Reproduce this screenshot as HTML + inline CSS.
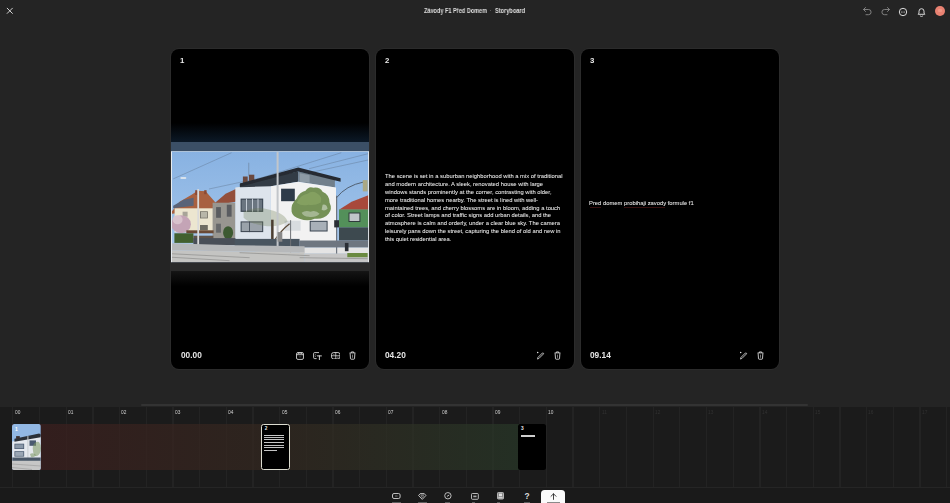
<!DOCTYPE html>
<html><head><meta charset="utf-8">
<style>
*{box-sizing:border-box;margin:0;padding:0}
html,body{width:950px;height:503px;overflow:hidden;background:#242424;-webkit-font-smoothing:antialiased;font-family:"Liberation Sans",sans-serif;color:#e6e6e6}
.abs{position:absolute}
.title{will-change:transform;position:absolute;top:6.6px;font-size:6.6px;font-weight:700;color:#dedede;white-space:nowrap;transform-origin:0 0}
.card{position:absolute;top:48.9px;width:198px;height:319.8px;background:#000;border-radius:8px;box-shadow:0 0 0 1px rgba(255,255,255,0.035);overflow:hidden}
.num{will-change:transform;position:absolute;left:9px;top:7.4px;font-size:7.8px;font-weight:700;color:#ececec}
.time{will-change:transform;position:absolute;left:9.3px;top:301.6px;font-size:8.3px;font-weight:700;color:#e4e4e4}
.desc{will-change:transform;position:absolute;left:8.9px;font-size:5.83px;line-height:7.88px;color:#ececec;white-space:nowrap;-webkit-text-stroke:0.04px #ececec}
.tl{position:absolute;left:0;top:407.4px;width:950px;height:79.6px;background:#1b1b1b;overflow:hidden}
.grid{position:absolute;top:0;width:1.3px;height:80px;background:#232323}
.lab{will-change:transform;position:absolute;top:2.3px;font-size:4.8px;color:#c8c8c8}
.tb{position:absolute;top:486.5px;left:0;width:950px;height:16.5px;background:#1a1a1a;border-top:1px solid #252525}
.ic{position:absolute}
</style></head><body>
<svg width="0" height="0" style="position:absolute"><defs>
<filter id="soft" x="-5%" y="-5%" width="110%" height="110%"><feGaussianBlur stdDeviation="0.35"/></filter>
<linearGradient id="sky" x1="0" y1="0" x2="0" y2="1"><stop offset="0" stop-color="#88b2e2"/><stop offset="0.6" stop-color="#9cc0e8"/><stop offset="1" stop-color="#b0ccec"/></linearGradient>
<g id="photo">
<rect x="171" y="152" width="199" height="111" fill="url(#sky)"/>
<!-- wires -->
<path d="M173.6 179.2L232 153M209.4 189.3L262 178M262 178L341.7 153M309.5 169L370 153.6M296 176L370 160" stroke="#4a5868" stroke-width="0.3" fill="none"/>
<rect x="180.7" y="177.4" width="6" height="2" rx="1" fill="#d8e2ec"/>
<!-- left house roof -->
<polygon points="172,212 180,202 192,195 198,191 206,191.5 217,204 217,210 172,214" fill="#a8603f"/>
<polygon points="173.6,206 184,200 194,198 194,206 173.6,208.5" fill="#5a6478"/>
<rect x="195.6" y="190.5" width="2.4" height="4.8" fill="#8a4a35"/>
<rect x="204.6" y="190.5" width="2.4" height="4" fill="#8a4a35"/>
<!-- cream house -->
<rect x="175" y="208.6" width="38.5" height="24" fill="#ece6d0"/>
<rect x="200.4" y="211.6" width="7.8" height="7.1" fill="#6e6c62"/>
<rect x="201.2" y="212.3" width="6.2" height="5.7" fill="#b8b6a8"/>
<rect x="200.4" y="225.3" width="7.8" height="5.3" fill="#6e6c62"/>
<rect x="183" y="212" width="5" height="5" fill="#a8a498"/>
<!-- gray house -->
<polygon points="212,206 226,194 240,187.5 242,188 242,197 236,202 213,206" fill="#94503a"/>
<rect x="213" y="203" width="23" height="36.6" fill="#989690"/>
<rect x="216.5" y="207.4" width="4.8" height="10.7" fill="#5a5c60"/>
<rect x="227.2" y="205" width="4.8" height="12" fill="#5a5c60"/>
<rect x="216.5" y="224" width="4.8" height="9" fill="#66686a"/>
<ellipse cx="228.5" cy="233" rx="5" ry="6.5" fill="#3c5a32"/>
<!-- pink tree / canopy / hedge -->
<ellipse cx="181.5" cy="224.5" rx="9.8" ry="9" fill="#c4a4b6"/>
<ellipse cx="178" cy="220" rx="5" ry="4.5" fill="#d8c2cc"/>
<rect x="186.7" y="230.6" width="27.3" height="3" fill="#6a4a35"/>
<rect x="174.8" y="233.6" width="19" height="9.6" fill="#42602e"/>
<rect x="193.8" y="236" width="20" height="7" fill="#5e5248"/>
<!-- white house left section (shadowed) -->
<polygon points="235.7,187.8 271.2,183.2 271.2,239.2 235.7,239.2" fill="#dde4ec"/>
<rect x="243.3" y="176.8" width="4.8" height="8" fill="#6a4a40"/>
<rect x="249.3" y="175" width="5.4" height="8" fill="#6a4a40"/>
<rect x="249.1" y="163" width="0.4" height="13" fill="#5a6470"/>
<polygon points="240.3,184 271.2,177 298.6,171.7 298.6,182 271.2,186.6 240.3,187.5" fill="#333b44"/>
<polygon points="298.6,171.7 335.3,179.7 335.3,187.8 298.6,182" fill="#717f8b"/>
<polygon points="300,173.5 310,175.5 310,183 300,182" fill="#8d9aa5"/>
<polygon points="240.3,183.9 298.6,167.8 341,178.6 341,182 298.6,171.7 240.3,187" fill="#262b31"/>
<polygon points="271.2,186.6 298.6,182 336.4,187.8 336.4,241.5 271.2,241.5" fill="#f2f2f2"/>
<rect x="241" y="198.9" width="22.6" height="13.3" fill="#3a4550"/>
<rect x="242" y="200" width="20.6" height="11" fill="#6a7480"/>
<rect x="241" y="221.7" width="22.6" height="10.7" fill="#3a4550"/>
<rect x="242" y="222.7" width="20.6" height="8.7" fill="#9aa2aa"/>
<rect x="246.5" y="199" width="0.8" height="13" fill="#dde4ec"/>
<rect x="252.4" y="199" width="0.8" height="13" fill="#dde4ec"/>
<rect x="258" y="199" width="0.8" height="13" fill="#dde4ec"/>
<rect x="249.5" y="221.7" width="0.8" height="10.7" fill="#3a4550"/>
<rect x="281.5" y="189" width="13.7" height="12.5" fill="#2e3a48"/>
<rect x="310.1" y="221.1" width="17.9" height="10.7" fill="#3a4550"/>
<rect x="311.1" y="222.1" width="15.9" height="8.7" fill="#a8b0b8"/>
<rect x="285" y="221" width="16" height="10" fill="#d8dcdf"/>
<!-- tree main -->
<path d="M292 212Q291 204 297 199Q300 192 306 191Q309 186 314 188Q320 187 323 192Q330 195 330 203Q333 209 329 214Q324 220 315 219Q308 222 300 219Q293 217 292 212Z" fill="#6a8a4a" opacity="0.93"/>
<path d="M297 203Q301 195 308 194Q313 190 318 194Q323 197 321 203Q315 206 309 205Q302 207 297 203Z" fill="#8aa664" opacity="0.75"/>
<path d="M302 213Q306 210 311 212Q316 210 320 214Q316 218 309 217Q304 217 302 213Z" fill="#dfe4dc" opacity="0.45"/>
<path d="M323 205Q327 204 328 209Q325 212 322 210Z" fill="#e8ece6" opacity="0.5"/>
<path d="M290 224Q282 230 274 242" stroke="#5a4a38" stroke-width="1.3" fill="none"/>
<!-- small sparse tree left -->
<path d="M244 212Q256 206 270 210Q286 214 288 222Q278 228 264 226Q250 224 244 218Z" fill="#6a7a4e" opacity="0.3"/>
<rect x="271.5" y="220" width="2.5" height="22" fill="#4a3e30"/>
<!-- green house -->
<polygon points="339.4,210 352,202 370,195 370,210" fill="#a84a3a"/>
<rect x="339.4" y="209.8" width="30.6" height="18" fill="#52905a"/>
<rect x="348.9" y="212.8" width="11.9" height="9.5" fill="#2e3a3a"/>
<rect x="349.9" y="213.8" width="9.9" height="7.5" fill="#c0c6c8"/>
<rect x="339.4" y="227.7" width="30.6" height="13.1" fill="#3e4850"/>
<!-- fence / base -->
<rect x="193.8" y="238.4" width="42" height="7" fill="#4a4f58"/>
<rect x="235" y="239.2" width="65" height="8.5" fill="#4a5560"/>
<rect x="300" y="240.8" width="70" height="7.1" fill="#6e7680"/>
<rect x="300" y="247.9" width="70" height="6" fill="#e4e4e4"/>
<rect x="345.3" y="243.2" width="3.6" height="8.3" fill="#2a2e34"/>
<!-- poles / lights -->
<rect x="197.7" y="189.4" width="1.8" height="56.5" fill="#dadada"/>
<rect x="277" y="152.4" width="2" height="100.3" fill="#c2c6ca"/>
<rect x="278" y="232.4" width="4.7" height="9.6" fill="#888"/>
<rect x="290.5" y="220.5" width="1" height="35.8" fill="#6e7276"/>
<rect x="336.4" y="196" width="1.2" height="61.5" fill="#6e7680"/>
<path d="M337 198Q346 186 364.4 182.2" stroke="#4a5664" stroke-width="0.9" fill="none"/>
<rect x="363.2" y="180.4" width="4.8" height="11.3" fill="#aaa884"/>
<rect x="334.6" y="220.5" width="4.8" height="7.2" fill="#2a2e34"/>
<!-- sidewalk / road -->
<polygon points="171,243.5 235,245.5 305,246.5 305,253 171,250.5" fill="#b6b8ba"/>
<polygon points="305,253.9 370,253.9 370,262.6 305,262.6" fill="#c6c6c6"/>
<polygon points="171,250.5 305,252.7 305,262.6 171,262.6" fill="#c4c4c2"/>
<path d="M171 254L250 258M171 257.5L230 261M240 253L310 256M300 258L368 259" stroke="#8e8e8c" stroke-width="0.7" fill="none"/>
<rect x="347.7" y="253.3" width="20.3" height="4.2" fill="#6a8a40"/>
<rect x="368.5" y="152" width="1.5" height="111" fill="#e8ecef"/>
<rect x="171" y="152" width="1.4" height="111" fill="#e8ecef"/>
</g>

</defs></svg>

<!-- header -->
<svg class="abs" style="left:6px;top:7px" width="8" height="8" viewBox="0 0 8 8"><path d="M1.2 1.2L6.4 6.4M6.4 1.2L1.2 6.4" stroke="#e8e8e8" stroke-width="0.9" stroke-linecap="round"/></svg>
<div class="title" style="left:424px;transform:scaleX(0.84)">Závody F1 Před Domem</div>
<div class="abs" style="left:490.3px;top:10.2px;width:1.2px;height:1.2px;border-radius:1px;background:#6a6a6a"></div>
<div class="title" style="left:494.8px;transform:scaleX(0.853)">Storyboard</div>

<!-- header right icons -->
<svg class="ic" style="left:862px;top:6px" width="11" height="10" viewBox="0 0 11 10"><path d="M3.5 1.5L1.5 3.5L3.5 5.5M1.7 3.5H6.5A2.6 2.6 0 0 1 6.5 8.7H4" fill="none" stroke="#8a8a8a" stroke-width="0.9" stroke-linecap="round" stroke-linejoin="round"/></svg>
<svg class="ic" style="left:880px;top:6px" width="11" height="10" viewBox="0 0 11 10"><path d="M7.5 1.5L9.5 3.5L7.5 5.5M9.3 3.5H4.5A2.6 2.6 0 0 0 4.5 8.7H7" fill="none" stroke="#8a8a8a" stroke-width="0.9" stroke-linecap="round" stroke-linejoin="round"/></svg>
<svg class="ic" style="left:898px;top:6.5px" width="10" height="10" viewBox="0 0 10 10"><circle cx="5" cy="5" r="3.7" fill="none" stroke="#e0e0e0" stroke-width="0.95"/><circle cx="3.6" cy="5" r="0.5" fill="#e0e0e0"/><circle cx="5" cy="5" r="0.5" fill="#e0e0e0"/><circle cx="6.4" cy="5" r="0.5" fill="#e0e0e0"/></svg>
<svg class="ic" style="left:916px;top:6.5px" width="11" height="10" viewBox="0 0 11 10"><path d="M2.2 7.3H8.8L8 6.1V4.2A2.5 2.5 0 0 0 3 4.2V6.1Z" fill="none" stroke="#e0e0e0" stroke-width="0.95" stroke-linejoin="round"/><path d="M4.4 8.6A1.1 1.1 0 0 0 6.6 8.6" fill="none" stroke="#e0e0e0" stroke-width="0.9"/></svg>
<div class="abs" style="left:934.8px;top:5.9px;width:9.8px;height:9.8px;border-radius:50%;background:#e98272"></div><div class="abs" style="left:937.6px;top:9px;width:4px;height:3.4px;border-radius:1px;background:rgba(255,190,170,0.35)"></div>

<!-- cards -->
<div class="card" style="left:171.4px">
  <div class="num">1</div>
  <div class="abs" style="left:0;top:74px;width:198px;height:20px;background:linear-gradient(#000,#0c1a29)"></div>
  <svg class="abs" style="left:0;top:93.4px" width="198" height="130" viewBox="171.4 142.3 198 130">
    <rect x="171" y="142" width="200" height="10.5" fill="#3b4f66"/>
    <rect x="171" y="151.5" width="200" height="1" fill="#dfe8f2"/>
    <use href="#photo" filter="url(#soft)"/>
    <rect x="171" y="262.6" width="200" height="9.2" fill="#2a2a2a"/>
  </svg>
  <div class="abs" style="left:0;top:222.8px;width:198px;height:14px;background:linear-gradient(#131313,#000)"></div>
  <div class="time">00.00</div>
  <svg class="ic" style="left:125px;top:302.8px" width="8" height="8" viewBox="0 0 8 8"><rect x="0.55" y="0.5" width="6.9" height="6.9" rx="1.4" fill="none" stroke="#e6e6e6" stroke-width="0.85"/><path d="M0.6 2.7H7.4" stroke="#e6e6e6" stroke-width="0.8"/><circle cx="2.3" cy="1.55" r="0.55" fill="#f0f0f0"/><circle cx="4" cy="1.55" r="0.55" fill="#f0f0f0"/><circle cx="5.7" cy="1.55" r="0.55" fill="#f0f0f0"/><path d="M2.6 4.9H5.4" stroke="#777" stroke-width="0.6"/></svg>
  <svg class="ic" style="left:142px;top:302.8px" width="9" height="8" viewBox="0 0 9 8"><path d="M5.6 0.6H1.6Q0.6 0.6 0.6 1.6V5.6Q0.6 6.6 1.6 6.6H3.2" fill="none" stroke="#e6e6e6" stroke-width="0.85" stroke-linecap="round"/><path d="M1.8 3.4L3 2.3M1.8 5L3.3 3.7" stroke="#bbb" stroke-width="0.6"/><path d="M4.4 3.9H8.4M6.4 3.9V7.7" stroke="#e6e6e6" stroke-width="0.9" stroke-linecap="round"/></svg>
  <svg class="ic" style="left:159.3px;top:303px" width="9.5" height="7.5" viewBox="0 0 9.5 7.5"><rect x="0.55" y="0.55" width="8.4" height="6.4" rx="2" fill="none" stroke="#e6e6e6" stroke-width="0.85"/><path d="M4.75 0.6V6.9M0.6 3.75H8.9" stroke="#e6e6e6" stroke-width="0.7"/><path d="M2 2.3H3.6M6 5.2H7.6" stroke="#999" stroke-width="0.6"/></svg>
  <svg class="ic" style="left:177.9px;top:302.2px" width="7" height="9" viewBox="0 0 7 9"><path d="M0.6 1.9H6.4M2.4 1.9V0.9H4.6V1.9" fill="none" stroke="#e6e6e6" stroke-width="0.8" stroke-linejoin="round"/><path d="M1.1 2.2L1.5 7.7Q1.6 8.2 2.1 8.2H4.9Q5.4 8.2 5.5 7.7L5.9 2.2" fill="none" stroke="#e6e6e6" stroke-width="0.85" stroke-linejoin="round"/><path d="M3.5 3.6V6.8" stroke="#aaa" stroke-width="0.7"/></svg>

</div>
<div class="card" style="left:376px">
  <div class="num">2</div>
  <div class="desc" style="top:124px">The scene is set in a suburban neighborhood with a mix of traditional<br>and modern architecture. A sleek, renovated house with large<br>windows stands prominently at the corner, contrasting with older,<br>more traditional homes nearby. The street is lined with well-<br>maintained trees, and cherry blossoms are in bloom, adding a touch<br>of color. Street lamps and traffic signs add urban details, and the<br>atmosphere is calm and orderly, under a clear blue sky. The camera<br>leisurely pans down the street, capturing the blend of old and new in<br>this quiet residential area.</div>
  <div class="time">04.20</div>
  <svg class="ic" style="left:159.6px;top:302.6px" width="9" height="9" viewBox="0 0 9 9"><path d="M2.1 7.7L1.6 8.1L1.9 6.5L6.4 2Q6.9 1.6 7.4 2.1Q7.8 2.6 7.4 3L2.9 7.5Z" fill="none" stroke="#e6e6e6" stroke-width="0.8" stroke-linejoin="round"/><circle cx="1.7" cy="1.6" r="0.75" fill="#e6e6e6"/></svg>
  <svg class="ic" style="left:177.5px;top:302.2px" width="7" height="9" viewBox="0 0 7 9"><path d="M0.6 1.9H6.4M2.4 1.9V0.9H4.6V1.9" fill="none" stroke="#e6e6e6" stroke-width="0.8" stroke-linejoin="round"/><path d="M1.1 2.2L1.5 7.7Q1.6 8.2 2.1 8.2H4.9Q5.4 8.2 5.5 7.7L5.9 2.2" fill="none" stroke="#e6e6e6" stroke-width="0.85" stroke-linejoin="round"/><path d="M3.5 3.6V6.8" stroke="#aaa" stroke-width="0.7"/></svg>
</div>
<div class="card" style="left:580.6px">
  <div class="num">3</div>
  <div class="desc" style="top:151.1px;left:8.3px">Pred domem probihaji zavody formule f1</div>
  <div class="time">09.14</div>
  <svg class="ic" style="left:158.6px;top:302.6px" width="9" height="9" viewBox="0 0 9 9"><path d="M2.1 7.7L1.6 8.1L1.9 6.5L6.4 2Q6.9 1.6 7.4 2.1Q7.8 2.6 7.4 3L2.9 7.5Z" fill="none" stroke="#e6e6e6" stroke-width="0.8" stroke-linejoin="round"/><circle cx="1.7" cy="1.6" r="0.75" fill="#e6e6e6"/></svg>
  <svg class="ic" style="left:176.7px;top:302.2px" width="7" height="9" viewBox="0 0 7 9"><path d="M0.6 1.9H6.4M2.4 1.9V0.9H4.6V1.9" fill="none" stroke="#e6e6e6" stroke-width="0.8" stroke-linejoin="round"/><path d="M1.1 2.2L1.5 7.7Q1.6 8.2 2.1 8.2H4.9Q5.4 8.2 5.5 7.7L5.9 2.2" fill="none" stroke="#e6e6e6" stroke-width="0.85" stroke-linejoin="round"/><path d="M3.5 3.6V6.8" stroke="#aaa" stroke-width="0.7"/></svg>
  <div class="abs" style="left:9.2px;top:158.4px;width:11px;height:0.7px;background:rgba(150,40,40,0.35)"></div>
  <div class="abs" style="left:43px;top:158.4px;width:41px;height:0.7px;background:rgba(150,40,40,0.35)"></div>
</div>

<!-- scrollbar -->
<div class="abs" style="left:141px;top:403.6px;width:667px;height:2.8px;border-radius:2px;background:#333"></div>

<!-- timeline -->
<div class="tl">
<div class="grid" style="left:12.20px"></div><div class="grid" style="left:38.88px"></div><div class="grid" style="left:65.56px"></div><div class="grid" style="left:92.24px"></div><div class="grid" style="left:118.92px"></div><div class="grid" style="left:145.60px"></div><div class="grid" style="left:172.28px"></div><div class="grid" style="left:198.96px"></div><div class="grid" style="left:225.64px"></div><div class="grid" style="left:252.32px"></div><div class="grid" style="left:279.00px"></div><div class="grid" style="left:305.68px"></div><div class="grid" style="left:332.36px"></div><div class="grid" style="left:359.04px"></div><div class="grid" style="left:385.72px"></div><div class="grid" style="left:412.40px"></div><div class="grid" style="left:439.08px"></div><div class="grid" style="left:465.76px"></div><div class="grid" style="left:492.44px"></div><div class="grid" style="left:519.12px"></div><div class="grid" style="left:545.80px"></div><div class="grid" style="left:572.48px"></div><div class="grid" style="left:599.16px"></div><div class="grid" style="left:625.84px"></div><div class="grid" style="left:652.52px"></div><div class="grid" style="left:679.20px"></div><div class="grid" style="left:705.88px"></div><div class="grid" style="left:732.56px"></div><div class="grid" style="left:759.24px"></div><div class="grid" style="left:785.92px"></div><div class="grid" style="left:812.60px"></div><div class="grid" style="left:839.28px"></div><div class="grid" style="left:865.96px"></div><div class="grid" style="left:892.64px"></div><div class="grid" style="left:919.32px"></div><div class="grid" style="left:946.00px"></div>
<div class="lab" style="left:14.70px;color:#cfcfcf">00</div><div class="lab" style="left:68.06px;color:#cfcfcf">01</div><div class="lab" style="left:121.42px;color:#cfcfcf">02</div><div class="lab" style="left:174.78px;color:#cfcfcf">03</div><div class="lab" style="left:228.14px;color:#cfcfcf">04</div><div class="lab" style="left:281.50px;color:#cfcfcf">05</div><div class="lab" style="left:334.86px;color:#cfcfcf">06</div><div class="lab" style="left:388.22px;color:#cfcfcf">07</div><div class="lab" style="left:441.58px;color:#cfcfcf">08</div><div class="lab" style="left:494.94px;color:#cfcfcf">09</div><div class="lab" style="left:548.30px;color:#cfcfcf">10</div><div class="lab" style="left:601.66px;color:#313131">11</div><div class="lab" style="left:655.02px;color:#313131">12</div><div class="lab" style="left:708.38px;color:#313131">13</div><div class="lab" style="left:761.74px;color:#313131">14</div><div class="lab" style="left:815.10px;color:#313131">15</div><div class="lab" style="left:868.46px;color:#313131">16</div><div class="lab" style="left:921.82px;color:#313131">17</div>
<div class="abs" style="left:12px;top:16.6px;width:507px;height:46.5px;background:linear-gradient(90deg,rgba(62,30,30,0.7),rgba(52,40,32,0.7) 50%,rgba(40,56,40,0.7))"></div>
<div class="abs" style="left:12px;top:16.6px;width:28.7px;height:46.5px;border-radius:2.5px;overflow:hidden"><svg width="28.7" height="46.5" viewBox="0 0 28.7 46.5">
<rect width="28.7" height="46.5" fill="#92b8e4"/>
<polygon points="0.3,17.5 28.7,12.1 28.7,36.9 0.3,36.9" fill="#e4e8ee"/>
<polygon points="2.45,14.8 27.2,9.4 28.7,10.5 28.7,13.2 2.45,17.8" fill="#2a3038"/>
<rect x="4.1" y="12.1" width="3.7" height="2.7" fill="#3a3030"/>
<rect x="2.45" y="19.7" width="9.7" height="5.3" fill="#4a5a70"/><rect x="3.2" y="20.4" width="8.2" height="3.9" fill="#8a98a8"/>
<rect x="2.45" y="27.2" width="9.7" height="5.4" fill="#4a5a70"/><rect x="3.2" y="27.9" width="8.2" height="4" fill="#9aa6b4"/>
<rect x="17.5" y="16.4" width="6.5" height="5.4" fill="#4a5a70"/>

<rect x="15.4" y="12.1" width="1" height="27" fill="#c8ccd0"/>
<path d="M21 22Q23 17 27 18Q29.5 21 28.7 27Q27 33 23 32Q20 28 21 22Z" fill="#7c9860" opacity="0.55"/><path d="M18 30Q21 28 24 31Q22 34 19 33Z" fill="#6a8a50" opacity="0.5"/><rect x="0.3" y="33.5" width="28.4" height="3.4" fill="#4a5868"/>
<rect x="0" y="36.9" width="28.7" height="9.6" fill="#c6c6c6"/>
<path d="M0 40L28.7 42M0 43.5L20 45.5" stroke="#999" stroke-width="0.6"/>
</svg></div>
<div class="abs" style="left:15px;top:18.5px;font-size:5px;font-weight:700;color:#fff">1</div>
<div class="abs" style="left:261.3px;top:16.6px;width:28.4px;height:46.5px;background:#000;border:1px solid #dcdcd0;border-radius:2.5px"></div>
<div class="abs" style="left:518px;top:16.6px;width:28px;height:46.5px;background:#000;border-radius:2.5px"></div>
<div class="abs" style="left:264.8px;top:18.6px;font-size:4.8px;font-weight:700;color:#e8e8e8">2</div>
<div class="abs" style="left:264.4px;top:28.1px;width:19.6px;height:0.95px;background:#c8c8c8"></div>
<div class="abs" style="left:264.4px;top:29.7px;width:19.8px;height:0.95px;background:#bdbdbd"></div>
<div class="abs" style="left:264.4px;top:32.0px;width:19.6px;height:0.95px;background:#c4c4c4"></div>
<div class="abs" style="left:264.4px;top:34.6px;width:19.2px;height:0.95px;background:#c8c8c8"></div>
<div class="abs" style="left:264.4px;top:37.3px;width:19.6px;height:0.95px;background:#c0c0c0"></div>
<div class="abs" style="left:264.4px;top:40.0px;width:19.4px;height:0.95px;background:#c4c4c4"></div>
<div class="abs" style="left:264.4px;top:42.3px;width:12.5px;height:0.95px;background:#c4c4c4"></div>
<div class="abs" style="left:520.9px;top:18.6px;font-size:4.8px;font-weight:700;color:#e8e8e8">3</div>
<div class="abs" style="left:521.2px;top:28px;width:13.6px;height:1.2px;background:#cfcfcf"></div>

</div>
<div class="tb"></div>
<svg class="ic" style="left:391.9px;top:492.5px" width="9" height="6" viewBox="0 0 9 6"><rect x="0.5" y="0.5" width="7.6" height="5" rx="1.5" fill="none" stroke="#dcdcdc" stroke-width="0.85"/><path d="M3 3H5.6" stroke="#888" stroke-width="0.8"/></svg>
<svg class="ic" style="left:418.3px;top:492.7px" width="8.5" height="7" viewBox="0 0 8.5 7"><path d="M2.2 0.6H6.3L7.9 2.5L4.25 6.4L0.6 2.5Z" fill="none" stroke="#dcdcdc" stroke-width="0.85" stroke-linejoin="round"/><path d="M2.5 2.1H6M3.2 3.3L4.25 4.5L5.3 3.3" fill="none" stroke="#dcdcdc" stroke-width="0.7"/></svg>
<svg class="ic" style="left:444.4px;top:492.3px" width="8" height="7.5" viewBox="0 0 8 7.5"><circle cx="3.9" cy="3.75" r="3.2" fill="none" stroke="#d6d6d6" stroke-width="0.85"/><path d="M3.3 4.2L4.9 3.2" stroke="#d6d6d6" stroke-width="0.9" stroke-linecap="round"/></svg>
<svg class="ic" style="left:470.7px;top:492.7px" width="8" height="7" viewBox="0 0 8 7"><rect x="0.5" y="0.5" width="6.8" height="5.8" rx="0.9" fill="none" stroke="#d6d6d6" stroke-width="0.85"/><rect x="2.3" y="2.6" width="3.2" height="1.6" fill="#aaa"/></svg>
<svg class="ic" style="left:497.4px;top:492.3px" width="7" height="7.5" viewBox="0 0 7 7.5"><rect x="0.45" y="0.45" width="6.1" height="6.6" rx="1" fill="#8a8a8a" stroke="#d0d0d0" stroke-width="0.8"/><rect x="2" y="1.6" width="3" height="2.6" fill="#e0e0e0"/><rect x="1.4" y="5" width="4.2" height="1.3" fill="#cfcfcf"/></svg>
<div class="abs" style="left:524.6px;top:491.6px;font-size:8.4px;font-weight:700;color:#dcdcdc;line-height:1">?</div>
<div class="abs" style="left:541px;top:490.2px;width:24px;height:16px;background:#fafafa;border-radius:3.5px"></div>
<svg class="ic" style="left:550.3px;top:492.6px" width="7" height="7" viewBox="0 0 7 7"><path d="M3.5 6.4V0.9M1 3.3L3.5 0.8L6 3.3" fill="none" stroke="#1e1e1e" stroke-width="0.85" stroke-linecap="round" stroke-linejoin="round"/></svg>
<div class="abs" style="left:391.5px;top:501.6px;width:9px;height:2px;background:#5e5e5e"></div>
<div class="abs" style="left:418px;top:501.6px;width:8.5px;height:2px;background:#5e5e5e"></div>
<div class="abs" style="left:445px;top:501.6px;width:4.5px;height:2px;background:#5e5e5e"></div>
<div class="abs" style="left:472px;top:501.6px;width:2.5px;height:2px;background:#5e5e5e"></div>
<div class="abs" style="left:497px;top:501.6px;width:3px;height:2px;background:#5e5e5e"></div>
<div class="abs" style="left:523.6px;top:501.6px;width:6px;height:2px;background:#5e5e5e"></div>
<div class="abs" style="left:546.5px;top:501.6px;width:13px;height:1.6px;background:#8a8a8a"></div>

</body></html>
